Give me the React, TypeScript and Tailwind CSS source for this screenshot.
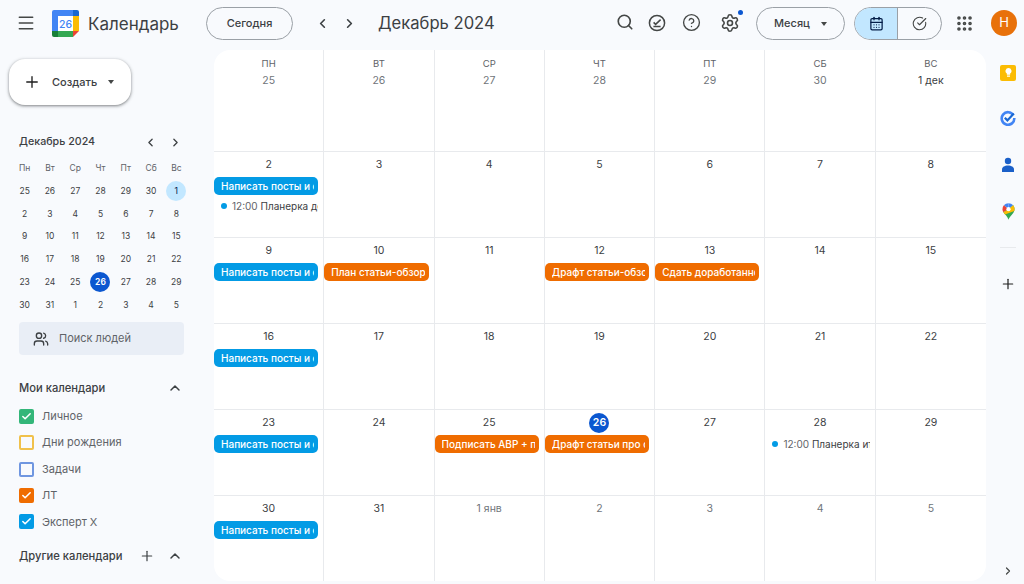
import { ChevronLeft, ChevronRight, ChevronUp, CircleHelp, Menu, Plus, Search, Settings, Grip, Users, Check, CircleCheckBig, CalendarDays } from "lucide-react";

type Ev = { title: string; color?: "blue" | "orange"; time?: string };
type Cell = { label: string; muted?: boolean; today?: boolean; events?: Ev[] };

const POSTS: Ev = { title: "Написать посты и сторис", color: "blue" };

const CELLS: Cell[] = [
  { label: "25", muted: true }, { label: "26", muted: true }, { label: "27", muted: true }, { label: "28", muted: true }, { label: "29", muted: true }, { label: "30", muted: true }, { label: "1 дек" },
  { label: "2", events: [POSTS, { title: "Планерка детальная", time: "12:00" }] }, { label: "3" }, { label: "4" }, { label: "5" }, { label: "6" }, { label: "7" }, { label: "8" },
  { label: "9", events: [POSTS] }, { label: "10", events: [{ title: "План статьи-обзора", color: "orange" }] }, { label: "11" }, { label: "12", events: [{ title: "Драфт статьи-обзора", color: "orange" }] }, { label: "13", events: [{ title: "Сдать доработанное", color: "orange" }] }, { label: "14" }, { label: "15" },
  { label: "16", events: [POSTS] }, { label: "17" }, { label: "18" }, { label: "19" }, { label: "20" }, { label: "21" }, { label: "22" },
  { label: "23", events: [POSTS] }, { label: "24" }, { label: "25", events: [{ title: "Подписать АВР + п", color: "orange" }] }, { label: "26", today: true, events: [{ title: "Драфт статьи про сервис", color: "orange" }] }, { label: "27" }, { label: "28", events: [{ title: "Планерка итоги", time: "12:00" }] }, { label: "29" },
  { label: "30", events: [POSTS] }, { label: "31" }, { label: "1 янв", muted: true }, { label: "2", muted: true }, { label: "3", muted: true }, { label: "4", muted: true }, { label: "5", muted: true },
];

const WEEK = ["ПН", "ВТ", "СР", "ЧТ", "ПТ", "СБ", "ВС"];
const MINI_HEAD = ["Пн", "Вт", "Ср", "Чт", "Пт", "Сб", "Вс"];
const MINI = ["25", "26", "27", "28", "29", "30", "1", "2", "3", "4", "5", "6", "7", "8", "9", "10", "11", "12", "13", "14", "15", "16", "17", "18", "19", "20", "21", "22", "23", "24", "25", "26", "27", "28", "29", "30", "31", "1", "2", "3", "4", "5"];

const CALENDARS = [
  { name: "Личное", box: "border-[#33b679] bg-[#33b679]", checked: true },
  { name: "Дни рождения", box: "border-[#f0c14b] bg-transparent", checked: false },
  { name: "Задачи", box: "border-[#6f96e0] bg-transparent", checked: false },
  { name: "ЛТ", box: "border-[#ef6c00] bg-[#ef6c00]", checked: true },
  { name: "Эксперт Х", box: "border-[#039be5] bg-[#039be5]", checked: true },
];

function CalendarLogo() {
  return (
    <svg width="27" height="27" viewBox="0 0 27 27">
      <path d="M2 0h19v6H6v15H0V2a2 2 0 0 1 2-2z" fill="#4285f4" />
      <path d="M21 0h4a2 2 0 0 1 2 2v4h-6z" fill="#1967d2" />
      <path d="M21 6h6v15h-6z" fill="#fbbc04" />
      <path d="M0 21h6v6H2a2 2 0 0 1-2-2z" fill="#188038" />
      <path d="M6 21h15v6H6z" fill="#34a853" />
      <path d="M21 21h6l-6 6z" fill="#ea4335" />
      <rect x="6" y="6" width="15" height="15" fill="#fff" />
      <text x="13.5" y="18" textAnchor="middle" fontSize="10.5" fontWeight="500" fill="#4285f4" fontFamily="Inter, sans-serif">26</text>
    </svg>
  );
}

function EventChip({ ev }: { ev: Ev }) {
  if (ev.time) {
    return (
      <div className="flex h-[18px] items-center pl-[7px] pr-[5px] text-[10px] text-[#3c4043]">
        <span className="h-[6px] w-[6px] shrink-0 rounded-full bg-[#039be5]" />
        <span className="ml-[5px] overflow-hidden whitespace-nowrap">
          <span className="text-[#5f6368]">{ev.time}</span> {ev.title}
        </span>
      </div>
    );
  }
  return (
    <div className={`mr-[5px] flex h-[18px] items-center rounded-[5px] pl-[7px] pr-[4px] ${ev.color === "blue" ? "bg-[#039be5]" : "bg-[#ef6c00]"}`}>
      <span className="overflow-hidden whitespace-nowrap text-[10px] font-medium text-white">{ev.title}</span>
    </div>
  );
}

function DayCell({ cell, index }: { cell: Cell; index: number }) {
  const firstRow = index < 7;
  const lastCol = index % 7 === 6;
  return (
    <div className={`min-w-0 border-b border-[#e8eaed] ${lastCol ? "" : "border-r"} ${firstRow ? "pt-[7px]" : "pt-[3px]"}`}>
      {firstRow && <div className="h-[14px] text-center text-[9.5px] leading-[14px] text-[#5f6368]">{WEEK[index]}</div>}
      <div className="flex h-[20px] items-center justify-center">
        {cell.today ? (
          <span className="flex h-[20px] w-[20px] items-center justify-center rounded-full bg-[#0b57d0] text-[10.5px] font-semibold text-white">{cell.label}</span>
        ) : (
          <span className={`text-[10.5px] ${cell.muted ? "text-[#70757a]" : "text-[#3c4043]"}`}>{cell.label}</span>
        )}
      </div>
      {cell.events && (
        <div className="mt-[2px] flex flex-col gap-[2px]">
          {cell.events.map((ev) => (
            <EventChip key={ev.title} ev={ev} />
          ))}
        </div>
      )}
    </div>
  );
}

function Header() {
  return (
    <header className="flex h-[50px] shrink-0 items-start pt-[7px] text-[#444746]">
      <Menu className="ml-[16px] mt-[6px] h-[20px] w-[20px]" strokeWidth={1.8} />
      <div className="ml-[16px] mt-[3px]">
        <CalendarLogo />
      </div>
      <div className="ml-[9px] mt-[4px] w-[118px] text-[17px] leading-[26px] text-[#3c4043]">Календарь</div>
      <button className="h-[33px] w-[87px] rounded-full border border-[#9aa0a6] text-[11px] font-medium text-[#3c4043]">Сегодня</button>
      <ChevronLeft className="ml-[22px] mt-[9px] h-[15px] w-[15px] text-[#3c4043]" strokeWidth={2.6} />
      <ChevronRight className="ml-[12px] mt-[9px] h-[15px] w-[15px] text-[#3c4043]" strokeWidth={2.6} />
      <div className="ml-[21px] mt-[3px] w-[234px] text-[16.6px] leading-[26px] text-[#3c4043]">Декабрь 2024</div>
      <Search className="ml-[4px] mt-[6px] h-[18px] w-[18px]" strokeWidth={2.2} />
      <div className="relative ml-[14px] mt-[7px] h-[18px] w-[18px]">
        <svg viewBox="0 0 18 18" className="h-[18px] w-[18px]" fill="none" stroke="currentColor" strokeWidth="1.5">
          <circle cx="9" cy="9" r="7.6" />
          <path d="M5.600 8.400 7.600 10.400 12.600 5.600M5.400 12.600h7.200" />
        </svg>
      </div>
      <CircleHelp className="ml-[16px] mt-[6px] h-[19px] w-[19px]" strokeWidth={1.7} />
      <div className="relative ml-[19px] mt-[6px] h-[20px] w-[20px]">
        <Settings className="h-[20px] w-[20px]" strokeWidth={1.9} />
        <span className="absolute -right-[3px] -top-[3px] h-[5px] w-[5px] rounded-full bg-[#0b57d0]" />
      </div>
      <button className="ml-[16px] flex h-[33px] w-[89px] items-center justify-center gap-[11px] rounded-full border border-[#9aa0a6] text-[11px] font-medium text-[#3c4043]">
        Месяц
        <span className="h-0 w-0 border-x-[3.5px] border-t-[4px] border-x-transparent border-t-[#444746]" />
      </button>
      <div className="ml-[9px] flex h-[33px] w-[88px] overflow-hidden rounded-full border border-[#9aa0a6]">
        <div className="flex w-[43px] items-center justify-center border-r border-[#9aa0a6] bg-[#c2e7ff] text-[#041e49]">
          <CalendarDays className="h-[15px] w-[15px]" strokeWidth={2} />
        </div>
        <div className="flex flex-1 items-center justify-center">
          <CircleCheckBig className="h-[15px] w-[15px]" strokeWidth={1.7} />
        </div>
      </div>
      <Grip className="ml-[13px] mt-[7px] h-[19px] w-[19px]" strokeWidth={2.6} />
      <div className="ml-[17px] mt-[3px] flex h-[26px] w-[26px] items-center justify-center rounded-full bg-[#e8710a] text-[13px] text-white">Н</div>
    </header>
  );
}

function Sidebar() {
  return (
    <aside className="w-[214px] shrink-0 text-[#3c4043]">
      <button className="ml-[9px] mt-[9px] flex h-[46px] w-[122px] items-center rounded-2xl bg-white pl-[14px] shadow-[0_1px_3px_1px_rgba(60,64,67,0.25),0_1px_2px_rgba(60,64,67,0.35)]">
        <Plus className="h-[18px] w-[18px] text-[#1f1f1f]" strokeWidth={1.8} />
        <span className="ml-[11px] text-[11px] font-medium">Создать</span>
        <span className="ml-[11px] h-0 w-0 border-x-[3.5px] border-t-[4px] border-x-transparent border-t-[#444746]" />
      </button>

      <div className="ml-[19px] mt-[28.500px] flex h-[18px] items-center">
        <span className="w-[125px] text-[10.7px] font-medium">Декабрь 2024</span>
        <ChevronLeft className="h-[13px] w-[13px]" strokeWidth={2.4} />
        <ChevronRight className="ml-[12px] h-[13px] w-[13px]" strokeWidth={2.4} />
      </div>

      <div className="ml-[12px] mt-[5.500px] grid w-[177px] grid-cols-7">
        {MINI_HEAD.map((d) => (
          <div key={d} className="flex h-[22.8px] items-center justify-center text-[8.5px] text-[#5f6368]">{d}</div>
        ))}
        {MINI.map((d, i) => (
          <div key={i} className="flex h-[22.8px] items-center justify-center">
            <span
              className={`flex h-[20px] w-[20px] items-center justify-center rounded-full text-[8.5px] ${
                i === 6 ? "bg-[#c2e7ff] text-[#041e49]" : i === 31 ? "bg-[#0b57d0] font-semibold text-white" : "text-[#3c4043]"
              }`}
            >
              {d}
            </span>
          </div>
        ))}
      </div>

      <div className="ml-[19px] mt-[5.500px] flex h-[33px] w-[165px] items-center rounded bg-[#e9eef6] pl-[14px] text-[11px] text-[#5f6368]">
        <Users className="h-[16px] w-[16px] text-[#3c4043]" strokeWidth={2} />
        <span className="ml-[10px]">Поиск людей</span>
      </div>

      <div className="ml-[19px] mt-[24px] flex h-[18px] items-center text-[11.2px] font-medium">
        <span className="w-[148px]">Мои календари</span>
        <ChevronUp className="h-[16px] w-[16px]" strokeWidth={2.2} />
      </div>

      <div className="ml-[19px] mt-[6px] flex flex-col">
        {CALENDARS.map((c) => (
          <div key={c.name} className="flex h-[26.4px] items-center">
            <span className={`flex h-[15px] w-[15px] items-center justify-center rounded-[2px] border-2 ${c.box}`}>
              {c.checked && <Check className="h-[11px] w-[11px] text-white" strokeWidth={3.4} />}
            </span>
            <span className="ml-[8px] text-[11px] text-[#5f6368]">{c.name}</span>
          </div>
        ))}
      </div>

      <div className="ml-[19px] mt-[12px] flex h-[18px] items-center text-[11.2px] font-medium">
        <span className="w-[120px]">Другие календари</span>
        <Plus className="h-[16px] w-[16px]" strokeWidth={1.8} />
        <ChevronUp className="ml-[12px] h-[16px] w-[16px]" strokeWidth={2.2} />
      </div>
    </aside>
  );
}

function Rail() {
  return (
    <aside className="flex w-[38px] shrink-0 flex-col items-center pl-[6px]">
      <div className="mt-[15px] flex h-[16px] w-[16px] items-center justify-center rounded-[2px] bg-[#fbbc04]">
        <svg viewBox="0 0 10 12" className="h-[10px] w-[9px]" fill="#fff">
          <path d="M5 0a3.600 3.600 0 0 0-2 6.600V8h4V6.600A3.600 3.600 0 0 0 5 0zM3.200 9h3.600v1.400H3.200z" />
        </svg>
      </div>
      <svg viewBox="0 0 16 16" className="mt-[29px] h-[16px] w-[16px]" fill="none">
        <path d="M13.400 5.200A6.300 6.300 0 1 0 14.300 8" stroke="#4285f4" strokeWidth="2.600" />
        <path d="M4.800 7.800 7.400 10.400 13.800 3.600" stroke="#1967d2" strokeWidth="2.200" />
      </svg>
      <svg viewBox="0 0 14 16" className="mt-[31px] h-[16px] w-[14px]" fill="#1a5fc8">
        <circle cx="7" cy="4" r="3.200" />
        <path d="M1 15v-2.600C1 10.200 3.500 8.500 7 8.500s6 1.700 6 3.900V15z" />
      </svg>
      <svg viewBox="0 0 14 18" className="mt-[30px] h-[17px] w-[13px]">
        <path d="M7 0a6.500 6.500 0 0 0-5 2.400L7 6.500z" fill="#4285f4" />
        <path d="M12 2.400A6.500 6.500 0 0 0 7 0v6.500z" fill="#4285f4" />
        <path d="M2 2.400A6.500 6.500 0 0 0 .5 6.500c0 1.200.4 2.300 1 3.300L7 6.500z" fill="#ea4335" />
        <path d="M12 2.400 7 6.500l-5.500 3.300C3 12.500 6 14 7 18c1-4 6.500-7 6.500-11.500 0-1.600-.6-3-1.500-4.100z" fill="#34a853" />
        <path d="M12 2.400 7 6.500l-5.500 3.300 1.800 2.300L13.200 8.500c.2-.6.300-1.300.3-2 0-1.600-.6-3-1.500-4.100z" fill="#fbbc04" />
        <circle cx="7" cy="6.500" r="2.300" fill="#fff" />
      </svg>
      <div className="mt-[27px] h-px w-[16px] bg-[#e8eaed]" />
      <Plus className="mt-[28px] h-[16px] w-[16px] text-[#1f1f1f]" strokeWidth={1.8} />
      <ChevronRight className="mt-[273px] h-[12px] w-[12px] text-[#444746]" strokeWidth={2.4} />
    </aside>
  );
}

export default function App() {
  return (
    <div className="flex h-[584px] w-[1024px] flex-col overflow-hidden bg-[#f8fafd] font-['Inter',sans-serif]">
      <Header />
      <div className="flex min-h-0 flex-1">
        <Sidebar />
        <main className="mb-[3px] grid w-[772px] shrink-0 grid-cols-7 grid-rows-[102px_repeat(5,86px)] overflow-hidden rounded-2xl bg-white">
          {CELLS.map((cell, i) => (
            <DayCell key={i} cell={cell} index={i} />
          ))}
        </main>
        <Rail />
      </div>
    </div>
  );
}
